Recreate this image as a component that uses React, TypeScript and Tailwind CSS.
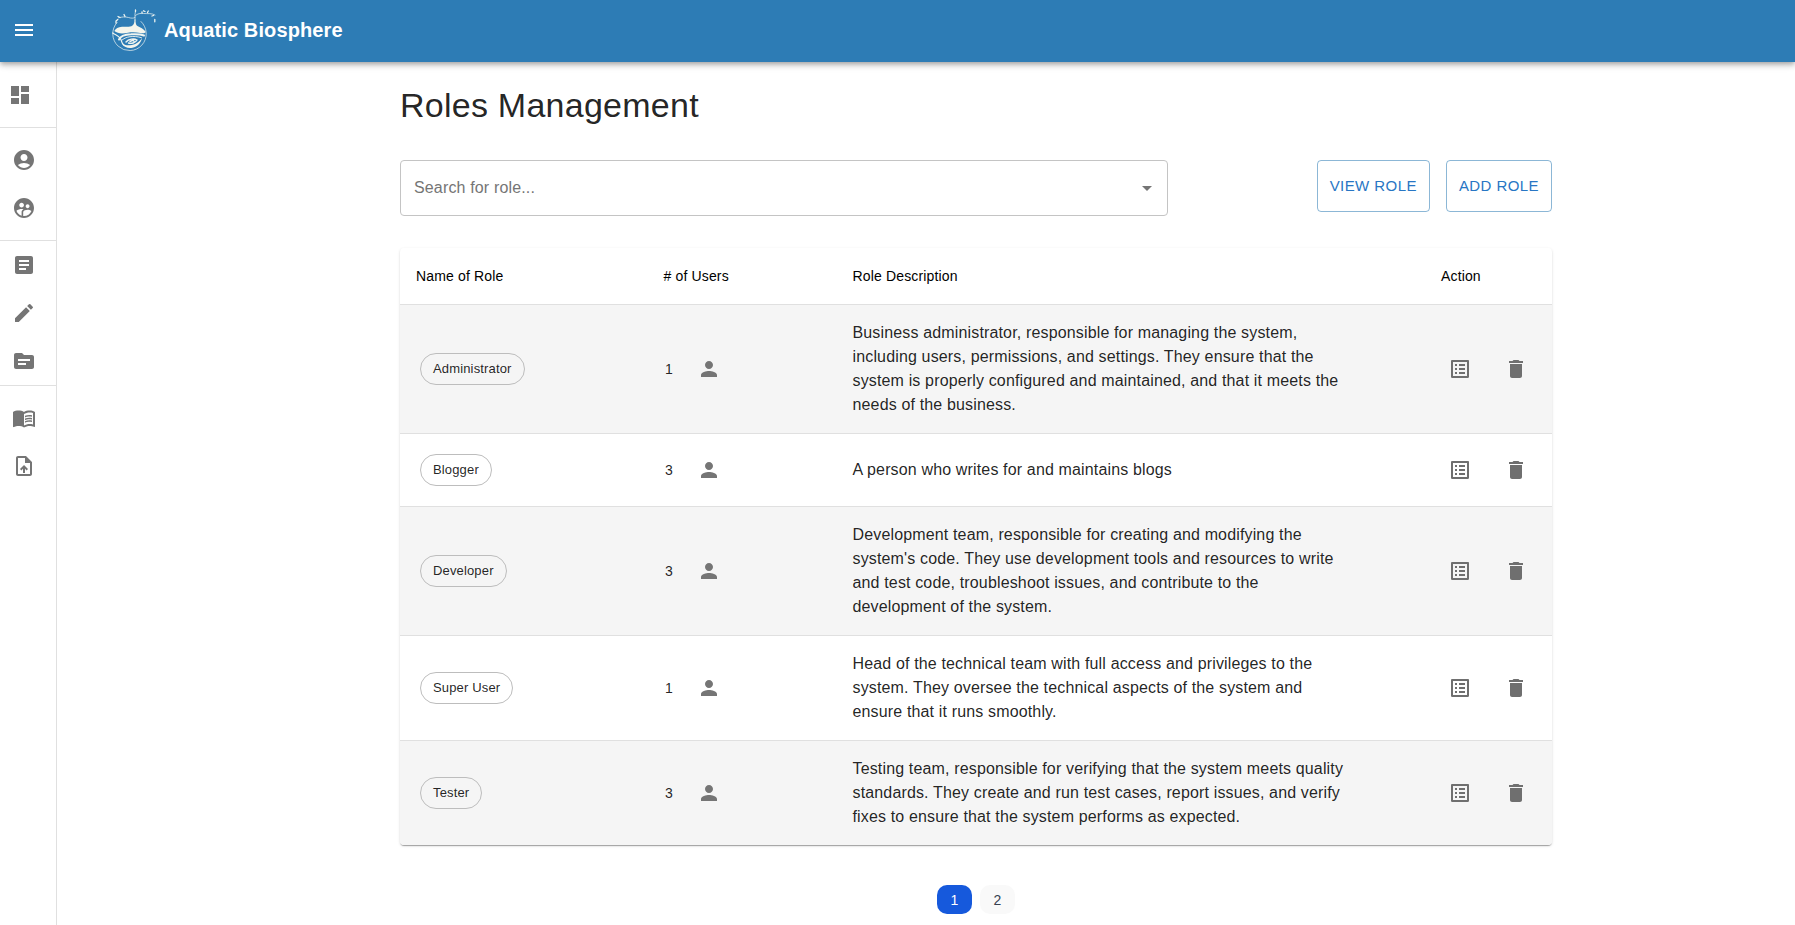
import type { ReactNode } from 'react';
import {
  MdAccountCircle,
  MdArrowDropDown,
  MdArticle,
  MdDashboard,
  MdDelete,
  MdEdit,
  MdMenu,
  MdMenuBook,
  MdOutlineListAlt,
  MdOutlineUploadFile,
  MdPerson,
  MdSupervisedUserCircle,
  MdTopic,
} from 'react-icons/md';

interface Role {
  name: string;
  users: number;
  description: string;
}

const roles: Role[] = [
  {
    name: 'Administrator',
    users: 1,
    description:
      'Business administrator, responsible for managing the system, including users, permissions, and settings. They ensure that the system is properly configured and maintained, and that it meets the needs of the business.',
  },
  { name: 'Blogger', users: 3, description: 'A person who writes for and maintains blogs' },
  {
    name: 'Developer',
    users: 3,
    description:
      "Development team, responsible for creating and modifying the system's code. They use development tools and resources to write and test code, troubleshoot issues, and contribute to the development of the system.",
  },
  {
    name: 'Super User',
    users: 1,
    description:
      'Head of the technical team with full access and privileges to the system. They oversee the technical aspects of the system and ensure that it runs smoothly.',
  },
  {
    name: 'Tester',
    users: 3,
    description:
      'Testing team, responsible for verifying that the system meets quality standards. They create and run test cases, report issues, and verify fixes to ensure that the system performs as expected.',
  },
];

function Logo() {
  return (
    <svg className="h-[44px] w-[47px]" viewBox="0 0 47 44" fill="none" stroke="#eef4f0" strokeLinecap="round">
      <path d="M7 13.500A16.800 16.800 0 1 0 31 12.500" strokeWidth="0.700" />
      <path
        d="M4.300 22C6 19.500 8 18 12 17.700c4 0 8 .8 10.500-1.200 1.500-1.300 2-3 2-6h1c0 3 .3 5 1.500 6.200 3 1.800 7 3 8.800 6.300-.8 1.300-3 1.600-5.500 1-4-.8-8-1.200-12.300-.3-5 1-10 1.300-13.700-1.700z"
        fill="#f4f5ec"
        stroke="none"
      />
      <path d="M25 11V5l.6-3.500M25 8.500c-1.500 1-4 .8-6.500 0-3.500-.8-6-.8-10 .3M25.500 6.500c2-2 5-2.300 8-2 4 .3 8.500-.5 11.500 1.500" strokeWidth="0.700" />
      <path d="M10 8.500l-2-1M7.800 10.500l-1.800 1.500v2M15 7.500l-1-2M25.500 2.500V1M32 4V2.800M33.500 1.800l1.500.7M37.500 3.500l.8-1.500M43.500 6.500l-1.500.5M44.800 10.500v2.300" strokeWidth="1.300" />
      <path d="M2.700 24c3 2 6 2.500 8 6 1 2 .5 4 3.500 6.500" strokeWidth="1.200" />
      <path d="M9 30.500c1.500-3.500 6-5 12-5.200 5-.3 9.500-.3 13 1.200" strokeWidth="2" />
      <path d="M11.500 31.500c4-4 12-5.300 20-2.800" strokeWidth="0.900" />
      <path d="M16 33c2.500-3 8-4 11-2-1.500 3-6 4-8.500 3M20 32.500l3-1.300 1 1" strokeWidth="1.400" />
      <path
        d="M11.500 33.500c2 2.500 5 3 8.500 2.800 5-.3 9.500-3.300 12-7.300-.8 4.800-4.500 8.500-9.500 9.800-4.500 1-9-.8-11-5.300z"
        fill="#f4f5ec"
        stroke="none"
      />
    </svg>
  );
}

function NavItem({ children }: { children: ReactNode }) {
  return <button className="flex h-12 w-full shrink-0 items-center pl-3 text-[#757575]">{children}</button>;
}

function Sidebar() {
  return (
    <aside className="flex w-[57px] shrink-0 flex-col border-r border-[#e0e0e0]">
      <div className="flex h-[66px] shrink-0 items-center border-b border-[#e0e0e0] pl-2 text-[#757575]">
        <MdDashboard size={24} />
      </div>
      <div className="border-b border-[#e0e0e0] py-2">
        <NavItem><MdAccountCircle size={24} /></NavItem>
        <NavItem><MdSupervisedUserCircle size={24} /></NavItem>
      </div>
      <div className="border-b border-[#e0e0e0]">
        <NavItem><MdArticle size={24} /></NavItem>
        <NavItem><MdEdit size={24} /></NavItem>
        <NavItem><MdTopic size={24} /></NavItem>
      </div>
      <div className="py-2">
        <NavItem><MdMenuBook size={24} /></NavItem>
        <NavItem><MdOutlineUploadFile size={24} /></NavItem>
      </div>
    </aside>
  );
}

function RolesTable() {
  return (
    <div className="mt-8 overflow-hidden rounded shadow-[0_2px_1px_-1px_rgba(0,0,0,0.2),0_1px_1px_0_rgba(0,0,0,0.14),0_1px_3px_0_rgba(0,0,0,0.12)]">
      <div className="grid h-[57px] grid-cols-[247.5px_189px_588.5px_127px] items-center border-b border-[#e0e0e0] text-sm tracking-[0.15px] text-black">
        <span className="pl-4">Name of Role</span>
        <span className="pl-4">#&nbsp;of Users</span>
        <span className="pl-4">Role Description</span>
        <span className="pl-4">Action</span>
      </div>
      {roles.map((role) => (
        <div
          key={role.name}
          className="grid min-h-[73px] grid-cols-[247.5px_189px_588.5px_127px] items-center border-b border-[#e0e0e0] py-4 odd:bg-white even:bg-[#f5f5f5] last:border-b-0"
        >
          <div className="flex pl-5">
            <span className="inline-flex h-8 items-center rounded-full border border-[#bdbdbd] px-3 text-[13px] tracking-[0.15px] text-black/87">
              {role.name}
            </span>
          </div>
          <div className="flex items-center pl-[17.5px]">
            <span className="w-8 text-sm text-black/87">{role.users}</span>
            <MdPerson size={24} className="text-[#757575]" />
          </div>
          <p className="w-[516px] pl-4 text-base tracking-[0.15px] text-black/87">{role.description}</p>
          <div className="flex gap-8 pl-[23px] text-[#6f6f6f]">
            <MdOutlineListAlt size={24} />
            <MdDelete size={24} />
          </div>
        </div>
      ))}
    </div>
  );
}

export default function App() {
  return (
    <div className="flex h-[925px] flex-col overflow-hidden bg-white font-['Liberation_Sans',Arial,sans-serif]">
      <header className="z-10 flex h-[62px] shrink-0 items-center bg-[#2d7cb5] pb-[2px] pl-3 text-white shadow-[0_2px_4px_-1px_rgba(0,0,0,0.2),0_4px_5px_0_rgba(0,0,0,0.14),0_1px_10px_0_rgba(0,0,0,0.12)]">
        <MdMenu size={24} />
        <div className="ml-[74px] pt-[2px]">
          <Logo />
        </div>
        <span className="ml-[7px] text-xl font-bold tracking-[0.12px]">Aquatic Biosphere</span>
      </header>
      <div className="flex min-h-0 flex-1">
        <Sidebar />
        <main className="flex-1 pl-[343px]">
          <div className="w-[1152px] pt-[22px]">
            <h1 className="text-[34px] leading-[42px] tracking-[0.25px] text-black/87">Roles Management</h1>
            <div className="mt-[34px] flex items-start">
              <div className="flex h-14 w-[768px] items-center justify-between rounded border border-[#c4c4c4] pr-2 pl-[13px]">
                <span className="text-base tracking-[0.15px] text-[#757575]">Search for role...</span>
                <MdArrowDropDown size={24} className="text-[#757575]" />
              </div>
              <div className="ml-auto flex gap-4 text-[15px] tracking-[0.43px] text-[#2876c4]">
                <button className="h-[52px] rounded border border-[#2d7cb5]/55 px-3">VIEW ROLE</button>
                <button className="h-[52px] rounded border border-[#2d7cb5]/55 px-3">ADD ROLE</button>
              </div>
            </div>
            <RolesTable />
            <nav className="mt-10 flex justify-center gap-2 text-sm">
              <button className="h-[29px] w-[35px] rounded-[10px] bg-[#1659dc] text-white">1</button>
              <button className="h-[29px] w-[35px] rounded-[10px] bg-[#f9f9f9] text-[#374151]">2</button>
            </nav>
          </div>
        </main>
      </div>
    </div>
  );
}
